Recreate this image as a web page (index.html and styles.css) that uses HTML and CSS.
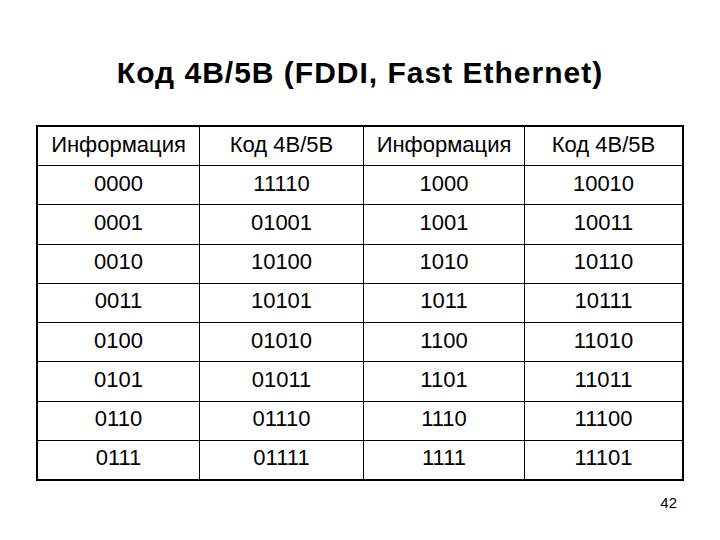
FILE: index.html
```
<!DOCTYPE html>
<html lang="ru">
<head>
<meta charset="utf-8">
<link rel="stylesheet" href="styles.css">
</head>
<body>
<h1 class="title">Код 4B/5B (FDDI, Fast Ethernet)</h1>
<div class="grid">
  <div class="cell head">Информация</div><div class="cell head">Код 4B/5B</div><div class="cell head">Информация</div><div class="cell head">Код 4B/5B</div>
  <div class="cell">0000</div><div class="cell">11110</div><div class="cell">1000</div><div class="cell">10010</div>
  <div class="cell">0001</div><div class="cell">01001</div><div class="cell">1001</div><div class="cell">10011</div>
  <div class="cell">0010</div><div class="cell">10100</div><div class="cell">1010</div><div class="cell">10110</div>
  <div class="cell">0011</div><div class="cell">10101</div><div class="cell">1011</div><div class="cell">10111</div>
  <div class="cell">0100</div><div class="cell">01010</div><div class="cell">1100</div><div class="cell">11010</div>
  <div class="cell">0101</div><div class="cell">01011</div><div class="cell">1101</div><div class="cell">11011</div>
  <div class="cell">0110</div><div class="cell">01110</div><div class="cell">1110</div><div class="cell">11100</div>
  <div class="cell">0111</div><div class="cell">01111</div><div class="cell">1111</div><div class="cell">11101</div>
</div>
<div class="pagenum">42</div>
</body>
</html>
```
FILE: styles.css
```
html, body {
  margin: 0;
  padding: 0;
  background: #fff;
}
body {
  width: 720px;
  height: 540px;
  font-family: "Liberation Sans", Arial, sans-serif;
  color: #000;
  overflow: hidden;
}
.title {
  margin: 56px 0 0 0;
  font-size: 30px;
  line-height: 34px;
  letter-spacing: 1px;
  font-weight: bold;
  text-align: center;
}
.grid {
  box-sizing: border-box;
  margin: 35px 0 0 36px;
  width: 648px;
  border: 2px solid #000;
  display: grid;
  grid-template-columns: 161px 164px 161px 158px;
  grid-template-rows: 38px repeat(8, 39.25px);
}
.cell {
  display: flex;
  align-items: center;
  justify-content: center;
  font-size: 22px;
  padding-bottom: 3px;
  box-sizing: border-box;
  border-left: 1px solid #000;
  border-top: 1px solid #000;
}
.cell:nth-child(4n+1) {
  border-left: none;
}
.cell.head {
  border-top: none;
}
.pagenum {
  margin-top: 13px;
  padding-right: 43px;
  text-align: right;
  font-size: 15px;
  line-height: 17px;
}
```
